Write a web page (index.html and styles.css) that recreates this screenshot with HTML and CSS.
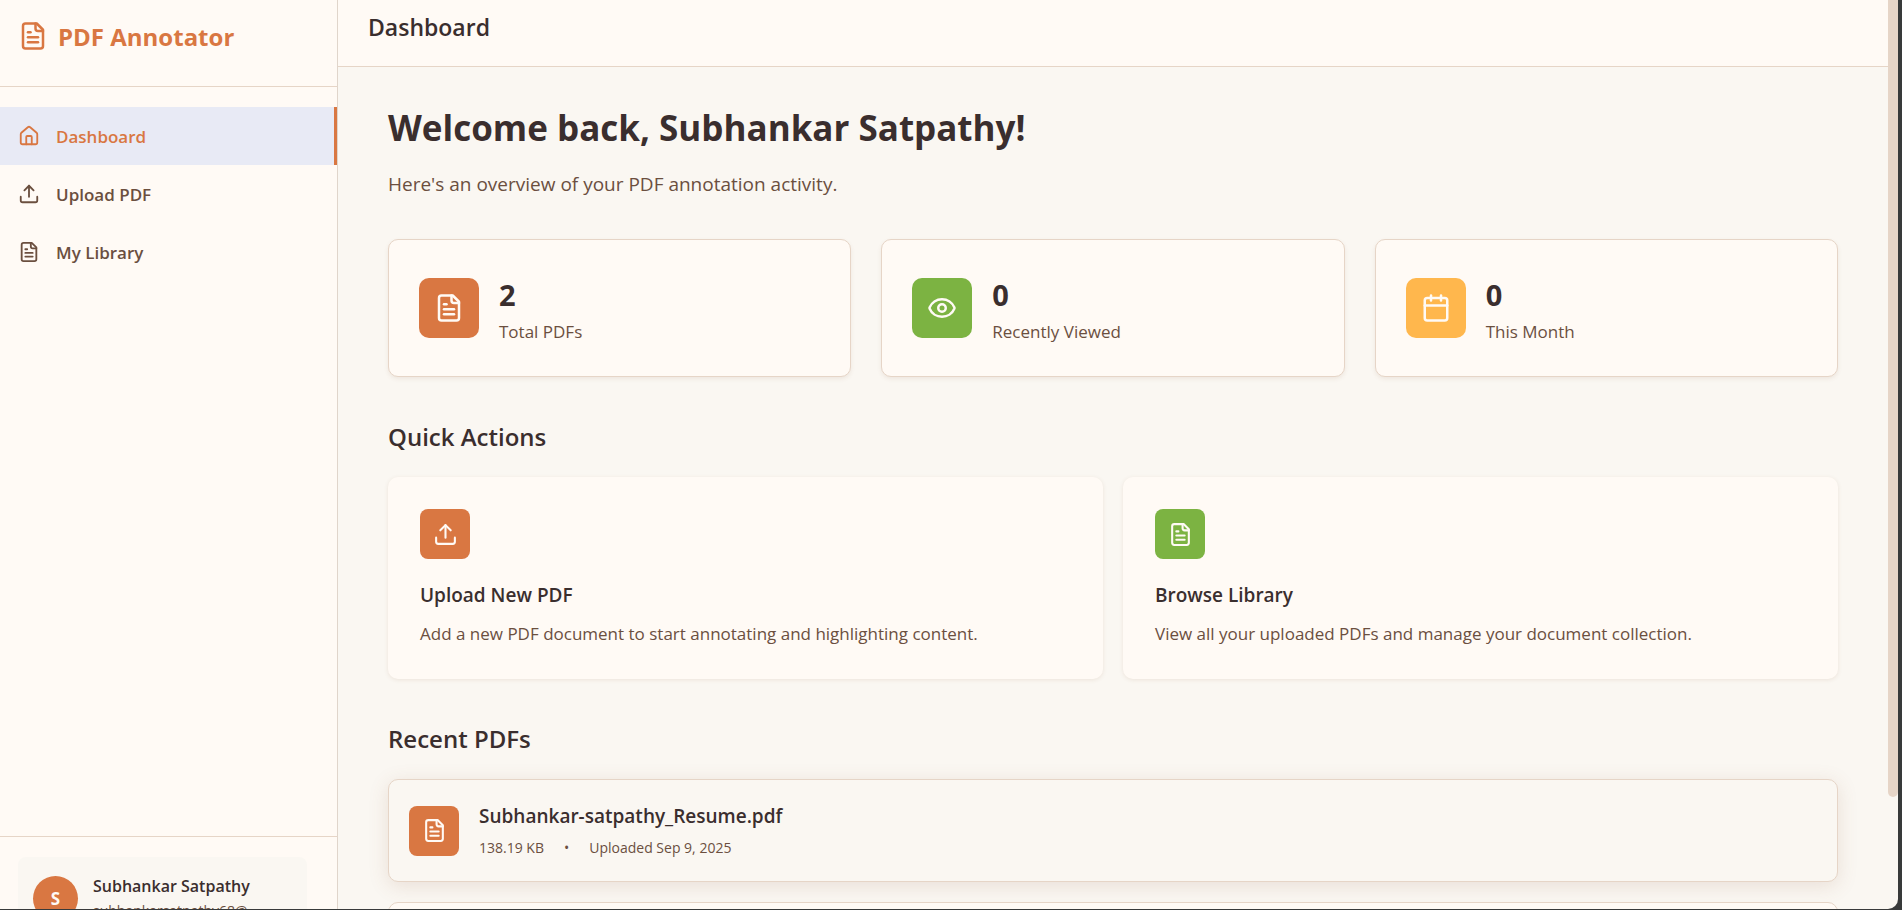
FILE: index.html
```html
<!DOCTYPE html>
<html lang="en">
<head>
<meta charset="utf-8">
<title>PDF Annotator - Dashboard</title>
<link rel="stylesheet" href="styles.css">
</head>
<body>
<svg class="sprite" aria-hidden="true">
  <symbol id="i-doc" viewBox="0 0 24 24"><path d="M15 2H6a2 2 0 0 0-2 2v16a2 2 0 0 0 2 2h12a2 2 0 0 0 2-2V7Z"/><path d="M14 2v4a2 2 0 0 0 2 2h4"/><path d="M10 9H8"/><path d="M16 13H8"/><path d="M16 17H8"/></symbol>
  <symbol id="i-home" viewBox="0 0 24 24"><path d="M15 21v-8a1 1 0 0 0-1-1h-4a1 1 0 0 0-1 1v8"/><path d="M3 10a2 2 0 0 1 .709-1.528l7-5.999a2 2 0 0 1 2.582 0l7 5.999A2 2 0 0 1 21 10v9a2 2 0 0 1-2 2H5a2 2 0 0 1-2-2z"/></symbol>
  <symbol id="i-upload" viewBox="0 0 24 24"><path d="M12 3v12"/><path d="m17 8-5-5-5 5"/><path d="M21 15v4a2 2 0 0 1-2 2H5a2 2 0 0 1-2-2v-4"/></symbol>
  <symbol id="i-eye" viewBox="0 0 24 24"><path d="M2.062 12.348a1 1 0 0 1 0-.696 10.75 10.75 0 0 1 19.876 0 1 1 0 0 1 0 .696 10.75 10.75 0 0 1-19.876 0"/><circle cx="12" cy="12" r="3"/></symbol>
  <symbol id="i-cal" viewBox="0 0 24 24"><path d="M8 2v4"/><path d="M16 2v4"/><rect width="18" height="18" x="3" y="4" rx="2"/><path d="M3 10h18"/></symbol>
</svg>
<div class="app">
  <aside class="sidebar">
    <div class="brand"><svg class="icon icon-lg"><use href="#i-doc"/></svg><span>PDF Annotator</span></div>
    <nav class="nav">
      <a class="nav-link active" href="#"><svg class="icon icon-sm"><use href="#i-home"/></svg>Dashboard</a>
      <a class="nav-link" href="#"><svg class="icon icon-sm"><use href="#i-upload"/></svg>Upload PDF</a>
      <a class="nav-link" href="#"><svg class="icon icon-sm"><use href="#i-doc"/></svg>My Library</a>
    </nav>
    <div class="account">
      <div class="user">
        <div class="avatar">S</div>
        <div class="user-text"><div class="user-name">Subhankar Satpathy</div><div class="user-mail">subhankarsatpathy68@gmail.com</div></div>
      </div>
    </div>
  </aside>
  <main class="main">
    <header class="topbar"><h2>Dashboard</h2></header>
    <div class="content">
      <h1>Welcome back, Subhankar Satpathy!</h1>
      <p class="lead">Here's an overview of your PDF annotation activity.</p>
      <section class="stats">
        <div class="stat"><div class="tile tile-lg orange"><svg class="icon icon-lg"><use href="#i-doc"/></svg></div><div><div class="num">2</div><div class="label">Total PDFs</div></div></div>
        <div class="stat"><div class="tile tile-lg green"><svg class="icon icon-lg"><use href="#i-eye"/></svg></div><div><div class="num">0</div><div class="label">Recently Viewed</div></div></div>
        <div class="stat"><div class="tile tile-lg amber"><svg class="icon icon-lg"><use href="#i-cal"/></svg></div><div><div class="num">0</div><div class="label">This Month</div></div></div>
      </section>
      <h2 class="section-title">Quick Actions</h2>
      <section class="actions">
        <a class="action" href="#"><div class="tile orange"><svg class="icon icon-md"><use href="#i-upload"/></svg></div><h3>Upload New PDF</h3><p>Add a new PDF document to start annotating and highlighting content.</p></a>
        <a class="action" href="#"><div class="tile green"><svg class="icon icon-md"><use href="#i-doc"/></svg></div><h3>Browse Library</h3><p>View all your uploaded PDFs and manage your document collection.</p></a>
      </section>
      <h2 class="section-title">Recent PDFs</h2>
      <section class="recent">
        <a class="file raised" href="#"><div class="tile orange"><svg class="icon icon-md"><use href="#i-doc"/></svg></div><div><h3>Subhankar-satpathy_Resume.pdf</h3><div class="meta"><span>138.19 KB</span><span>•</span><span>Uploaded Sep 9, 2025</span></div></div></a>
        <a class="file" href="#" aria-label="Older document"></a>
      </section>
    </div>
  </main>
  <div class="scroll-track"><div class="scroll-thumb"></div></div>
</div>
</body>
</html>
```
FILE: styles.css
```css
* { box-sizing: border-box; }
html, body { height: 100%; }
body {
  margin: 0;
  padding: 0 4px 1px 0;
  overflow: hidden;
  background: #383a3a;
  color: #3a2e2e;
  font-family: "Segoe UI", "Open Sans", "Noto Sans", sans-serif;
  font-size: 18px;
}
h1, h2, h3, p { margin: 0; }
a { color: inherit; text-decoration: none; }
.sprite { display: none; }
.app {
  display: flex;
  height: 100%;
  overflow: hidden;
  background: #faf7f2;
  border-radius: 0 0 10px 0;
}
.icon { flex: none; fill: none; stroke: currentColor; stroke-width: 2; stroke-linecap: round; stroke-linejoin: round; }
.icon-sm { width: 22px; height: 22px; }
.icon-md { width: 25px; height: 25px; }
.icon-lg { width: 30px; height: 30px; }

.sidebar { flex: none; display: flex; flex-direction: column; width: 338px; background: #fffaf5; border-right: 1px solid #e0d5cb; }
.brand { display: flex; align-items: center; gap: 10px; height: 87px; padding: 0 18px 14px; border-bottom: 1px solid #e6d5c7; color: #d97742; font-size: 24px; font-weight: 700; }
.nav { padding-top: 20px; }
.nav-link { display: flex; align-items: center; gap: 16px; height: 58px; padding: 0 18px; color: #6b4f3f; font-size: 17px; font-weight: 600; }
.nav-link.active { background: #e8eaf5; color: #d97742; border-right: 3px solid #d97742; }
.account { flex: none; height: 73px; margin-top: auto; padding: 20px 30px 0 18px; border-top: 1px solid #e6d5c7; }
.user { display: flex; align-items: center; gap: 15px; height: 83px; padding: 0 15px; border-radius: 8px; background: #faf7f2; }
.avatar { flex: none; display: grid; place-items: center; width: 45px; height: 45px; border-radius: 50%; background: #d97742; color: #fffaf5; font-size: 17px; font-weight: 700; }
.user-text { min-width: 0; max-width: 172px; white-space: nowrap; }
.user-name { font-size: 16px; font-weight: 600; line-height: 24px; }
.user-mail { overflow: hidden; color: #6b4f3f; font-size: 14px; line-height: 26px; text-overflow: ellipsis; }

.main { flex: 1; min-width: 0; overflow: hidden; }
.topbar { height: 67px; padding: 11px 30px 0; background: #fffaf5; border-bottom: 1px solid #e6d5c7; }
.topbar h2 { font-size: 23px; font-weight: 600; line-height: 32px; }
.content { padding: 36px 50px 0; }
h1 { font-size: 35px; font-weight: 700; line-height: 50px; }
.lead { margin-top: 17px; color: #6b4f3f; font-size: 19px; line-height: 28px; }
.stats { display: grid; grid-template-columns: repeat(3, 1fr); gap: 30px; margin-top: 41px; }
.stat { display: flex; align-items: center; gap: 20px; height: 138px; padding: 0 30px; border: 1px solid #e6d5c7; border-radius: 10px; background: #fffaf5; box-shadow: 0 2px 4px rgba(139, 90, 60, 0.1); }
.tile { flex: none; display: grid; place-items: center; width: 50px; height: 50px; border-radius: 8px; color: #fffaf5; }
.tile-lg { width: 60px; height: 60px; border-radius: 10px; }
.orange { background: #d97742; }
.green { background: #7cb342; }
.amber { background: #ffb74d; }
.num { padding-top: 6px; font-size: 29px; font-weight: 700; line-height: 40px; }
.label { padding-top: 1px; color: #6b4f3f; font-size: 17px; line-height: 32px; }
.section-title { margin-top: 43px; font-size: 24px; font-weight: 600; line-height: 34px; }
.actions { display: grid; grid-template-columns: repeat(2, 1fr); gap: 20px; margin-top: 23px; }
.action { height: 202px; padding: 32px; border-radius: 10px; background: #fffaf5; box-shadow: 0 1px 4px rgba(139, 90, 60, 0.12); }
.action h3 { margin-top: 23px; font-size: 19px; font-weight: 600; line-height: 26px; }
.action p { margin-top: 13px; color: #6b4f3f; font-size: 17px; line-height: 26px; }
.recent { display: grid; gap: 20px; margin-top: 23px; }
.file { display: flex; align-items: center; gap: 20px; height: 103px; padding: 0 20px; border: 1px solid #e6d5c7; border-radius: 10px; background: #fffaf5; }
.raised { background: #faf7f2; box-shadow: 0 4px 20px rgba(139, 90, 60, 0.15); }
.file h3 { font-size: 19px; font-weight: 600; line-height: 28px; }
.meta { display: flex; gap: 20px; margin-top: 7px; color: #6b4f3f; font-size: 14px; line-height: 22px; }

.scroll-track { flex: none; width: 10px; }
.scroll-thumb { height: 797px; border-radius: 0 0 5px 5px; background: #e6d5c7; }
```
